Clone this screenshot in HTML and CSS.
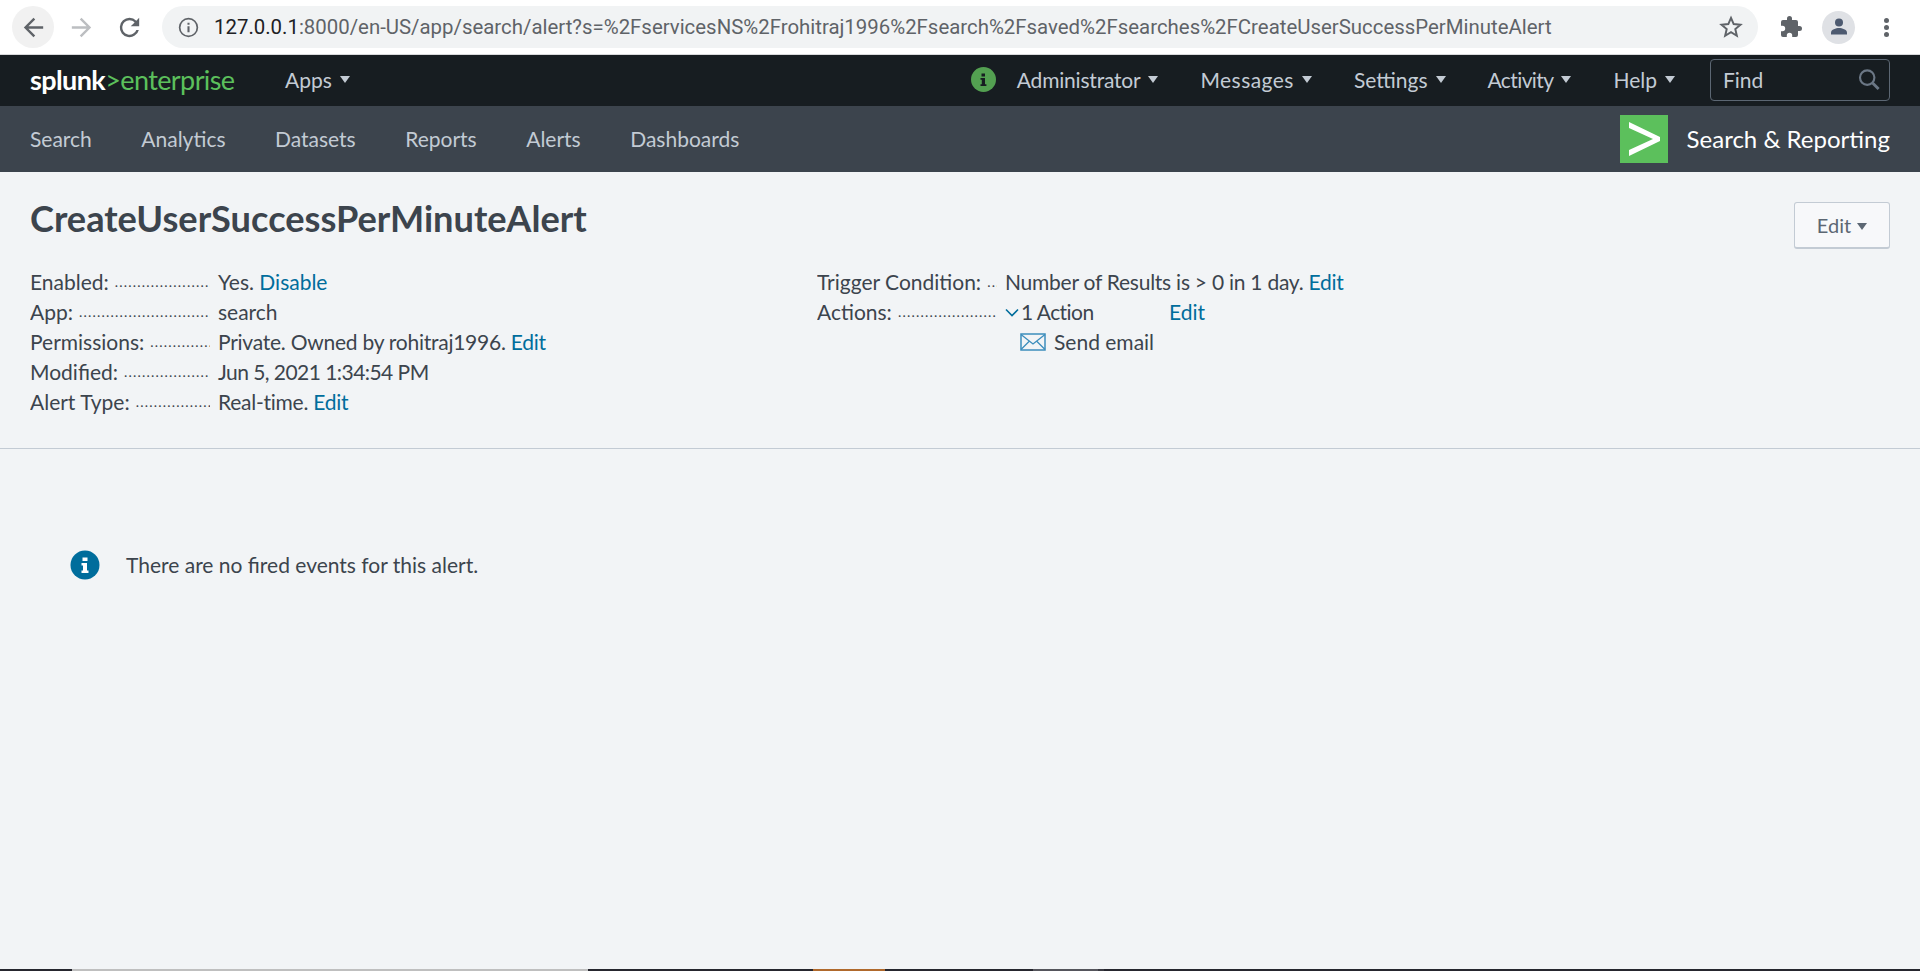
FILE: index.html
```html
<!DOCTYPE html>
<html lang="en">
<head>
  <meta charset="UTF-8">
  <title>CreateUserSuccessPerMinuteAlert</title>
  <link rel="stylesheet" href="styles.css">
</head>
<body>
  <!-- browser toolbar -->
  <div class="toolbar">
    <span class="tool-btn back">
      <svg width="29" height="29" viewBox="0 0 24 24"><path d="M20 11H7.800l5.600-5.600L12 4l-8 8 8 8 1.400-1.400L7.800 13H20z" fill="#5f6368"/></svg>
    </span>
    <span class="tool-btn">
      <svg width="29" height="29" viewBox="0 0 24 24"><path d="M4 11h12.200l-5.600-5.600L12 4l8 8-8 8-1.400-1.400 5.600-5.600H4z" fill="#bcbec1"/></svg>
    </span>
    <span class="tool-btn">
      <svg width="29" height="29" viewBox="0 0 24 24"><path d="M17.650 6.350A7.950 7.950 0 0 0 12 4a8 8 0 1 0 7.730 10h-2.080A6 6 0 1 1 12 6c1.660 0 3.140.690 4.220 1.780L13 11h7V4z" fill="#5f6368"/></svg>
    </span>
    <div class="omnibox">
      <svg class="site-info" width="23" height="23" viewBox="0 0 20 20"><circle cx="10" cy="10" r="7.700" fill="none" stroke="#5f6368" stroke-width="1.500"/><path d="M9.100 9h1.800v5.200H9.100zM9.100 5.800h1.800v1.800H9.100z" fill="#5f6368"/></svg>
      <span class="url"><b>127.0.0.1</b>:8000/en-US/app/search/alert?s=%2FservicesNS%2Frohitraj1996%2Fsearch%2Fsaved%2Fsearches%2FCreateUserSuccessPerMinuteAlert</span>
      <svg class="star" width="28" height="28" viewBox="0 0 24 24"><path d="M12 4.200l2.300 5.300 5.800.5-4.400 3.800 1.300 5.700-5-3-5 3 1.300-5.700L3.900 10l5.800-.5z" fill="none" stroke="#5f6368" stroke-width="1.700"/></svg>
    </div>
    <svg class="puzzle" width="24" height="24" viewBox="0 0 24 24"><path d="M20.500 11H19V7a2 2 0 0 0-2-2h-4V3.500a2.500 2.500 0 0 0-5 0V5H4a2 2 0 0 0-2 2v3.800h1.500a2.700 2.700 0 0 1 0 5.400H2V20a2 2 0 0 0 2 2h3.800v-1.500a2.700 2.700 0 0 1 5.400 0V22H17a2 2 0 0 0 2-2v-4h1.500a2.500 2.500 0 0 0 0-5z" fill="#5f6368"/></svg>
    <span class="avatar">
      <svg width="20" height="20" viewBox="0 0 20 20"><circle cx="10" cy="5.500" r="4" fill="#4d5a70"/><path d="M2 17.500v-2c0-3 5-4.500 8-4.500s8 1.500 8 4.500v2z" fill="#4d5a70"/></svg>
    </span>
    <span class="kebab"><i></i><i></i><i></i></span>
  </div>

  <!-- splunk bar -->
  <div class="splunk-bar">
    <div class="logo"><span class="logo-white">splunk</span><span class="logo-green">&gt;enterprise</span></div>
    <a class="menu">Apps<i class="caret"></i></a>
    <div class="bar-right">
      <span class="health">
        <svg width="25" height="25" viewBox="0 0 25 25"><circle cx="12.500" cy="12.500" r="12.500" fill="#53a051"/><path d="M10.500 6.500h3.500v3h-3.500zM9.500 11h4.500v6.200h1.400v1.800H9.500v-1.800h1.300v-4.400H9.500z" fill="#171d21"/></svg>
      </span>
      <a class="menu admin">Administrator<i class="caret"></i></a>
      <a class="menu wide">Messages<i class="caret"></i></a>
      <a class="menu">Settings<i class="caret"></i></a>
      <a class="menu narrow">Activity<i class="caret"></i></a>
      <a class="menu">Help<i class="caret"></i></a>
      <div class="find">
        <span>Find</span>
        <svg width="24" height="24" viewBox="0 0 20 20"><circle cx="8.500" cy="8" r="6" fill="none" stroke="#6b7785" stroke-width="1.800"/><path d="M13 12.500l5 5" stroke="#6b7785" stroke-width="2.400"/></svg>
      </div>
    </div>
  </div>

  <!-- app bar -->
  <div class="app-bar">
    <nav class="app-nav">
      <a>Search</a>
      <a>Analytics</a>
      <a>Datasets</a>
      <a>Reports</a>
      <a>Alerts</a>
      <a>Dashboards</a>
    </nav>
    <div class="app-name">
      <span class="app-icon">
        <svg width="48" height="48" viewBox="0 0 48 48"><path d="M9 7l31 15v4L9 41v-6l24-11L9 13z" fill="#fff"/></svg>
      </span>
      <span class="app-label">Search &amp; Reporting</span>
    </div>
  </div>

  <!-- alert header -->
  <header class="alert-head">
    <div class="title-row">
      <h1>CreateUserSuccessPerMinuteAlert</h1>
      <button class="edit-btn">Edit<i class="caret dark"></i></button>
    </div>
    <div class="meta">
      <dl class="meta-col left">
        <div class="row"><dt>Enabled:</dt><dd>Yes. <a>Disable</a></dd></div>
        <div class="row"><dt>App:</dt><dd>search</dd></div>
        <div class="row"><dt>Permissions:</dt><dd class="tight">Private. Owned by rohitraj1996. <a>Edit</a></dd></div>
        <div class="row"><dt>Modified:</dt><dd class="tighter">Jun 5, 2021 1:34:54 PM</dd></div>
        <div class="row"><dt>Alert Type:</dt><dd class="tight">Real-time. <a>Edit</a></dd></div>
      </dl>
      <dl class="meta-col right">
        <div class="row"><dt>Trigger Condition:</dt><dd class="tight">Number of Results is &gt; 0 in 1 day. <a>Edit</a></dd></div>
        <div class="row">
          <dt>Actions:</dt>
          <dd class="actions">
            <svg class="chev" width="14" height="9" viewBox="0 0 14 9"><path d="M1 1.500L7 7.500l6-6" fill="none" stroke="#006d9c" stroke-width="1.600"/></svg>
            <span class="action-count tighter">1 Action</span><a>Edit</a>
          </dd>
        </div>
        <div class="row">
          <dt class="blank"></dt>
          <dd class="send">
            <svg width="26" height="18" viewBox="0 0 26 18"><rect x="1" y="1" width="24" height="16" fill="none" stroke="#3c8dbc" stroke-width="1.500"/><path d="M1 1.500l12 9.500 12-9.500M1 16.500l8.500-8.500M25 16.500L16.500 8" fill="none" stroke="#3c8dbc" stroke-width="1.300"/></svg>
            <span>Send email</span>
          </dd>
        </div>
      </dl>
    </div>
  </header>

  <main class="empty">
    <svg width="30" height="30" viewBox="0 0 30 30"><circle cx="15" cy="15" r="14.500" fill="#006d9c"/><path d="M12.500 7.500h5v3.500h-5zM11.500 13h5.500v7.500h1.500V23h-7v-2.500H13v-5h-1.500z" fill="#fff"/></svg>
    <p>There are no fired events for this alert.</p>
  </main>

  <!-- taskbar sliver along the bottom edge -->
  <div class="taskstrip">
    <i class="s1"></i><i class="s2"></i><i class="s3"></i><i class="s4"></i><i class="s5"></i><i class="s6"></i><i class="s7"></i><i class="s8"></i>
  </div>
</body>
</html>
```
FILE: styles.css
```css
html, body {
  margin: 0;
  padding: 0;
  height: 971px;
  overflow: hidden;
}
body {
  display: flex;
  flex-direction: column;
  background: #f2f4f6;
  color: #3c444d;
  font-family: "Lato", "Open Sans", sans-serif;
  font-size: 21px;
}
a {
  color: #006d9c;
  text-decoration: none;
}

/* browser toolbar */
.toolbar {
  height: 54px;
  background: #fff;
  border-bottom: 1px solid #d8d9db;
  display: flex;
  align-items: center;
  padding: 0 30px 0 12px;
  flex: none;
}
.tool-btn {
  width: 42px;
  height: 42px;
  margin-right: 6px;
  border-radius: 50%;
  display: flex;
  align-items: center;
  justify-content: center;
  flex: none;
}
.tool-btn.back {
  background: #f1f1f1;
}
.omnibox {
  flex: 1;
  height: 42px;
  margin-left: 6px;
  background: #f1f3f4;
  border-radius: 21px;
  display: flex;
  align-items: center;
  padding: 0 13px 0 15px;
}
.url {
  flex: 1;
  margin-left: 14px;
  font-family: "Roboto", sans-serif;
  font-size: 20.400px;
  color: #5f6368;
  white-space: nowrap;
}
.url b {
  font-weight: 400;
  color: #202124;
}
.puzzle {
  flex: none;
  margin-left: 21px;
}
.avatar {
  width: 33px;
  height: 33px;
  margin-left: 19px;
  background: #dfe1e5;
  border-radius: 50%;
  display: flex;
  align-items: center;
  justify-content: center;
  flex: none;
}
.kebab {
  width: 6px;
  margin-left: 29px;
  display: flex;
  flex-direction: column;
  gap: 2px;
  flex: none;
}
.kebab i {
  width: 5px;
  height: 5px;
  border-radius: 50%;
  background: #5f6368;
}

/* splunk bar */
.splunk-bar {
  height: 51px;
  box-sizing: border-box;
  background: #171d21;
  display: flex;
  align-items: center;
  padding: 0 30px 2px;
  flex: none;
  color: #c3cbd4;
}
.logo {
  font-family: "Lato", sans-serif;
  font-size: 27px;
  letter-spacing: -0.600px;
  width: 255px;
  white-space: nowrap;
}
.logo-white {
  color: #fff;
  font-weight: 700;
}
.logo-green {
  color: #5cc05c;
}
.menu {
  color: #c3cbd4;
  font-size: 21px;
  display: flex;
  align-items: center;
  white-space: nowrap;
}
.menu.admin {
  letter-spacing: -0.200px;
}
.menu.wide {
  letter-spacing: 0.450px;
}
.menu.narrow {
  letter-spacing: -0.600px;
}
.caret {
  display: inline-block;
  width: 0;
  height: 0;
  margin-left: 8px;
  border-left: 5.500px solid transparent;
  border-right: 5.500px solid transparent;
  border-top: 7px solid #c3cbd4;
}
.caret.dark {
  border-left-width: 5px;
  border-right-width: 5px;
  border-top-color: #5c6773;
}
.bar-right {
  margin-left: auto;
  display: flex;
  align-items: center;
  gap: 42px;
}
.health {
  display: flex;
  margin-right: -21px;
}
.find {
  width: 180px;
  height: 42px;
  box-sizing: border-box;
  margin-left: -7px;
  border: 1px solid #5c6773;
  border-radius: 4px;
  display: flex;
  align-items: center;
  justify-content: space-between;
  padding: 0 8px 0 12px;
  color: #c3cbd4;
  font-size: 21px;
}

/* app bar */
.app-bar {
  height: 66px;
  box-sizing: border-box;
  background: #3c444d;
  display: flex;
  align-items: center;
  justify-content: space-between;
  padding: 0 30px;
  flex: none;
}
.app-nav {
  display: flex;
  gap: 49.500px;
  padding-bottom: 2px;
}
.app-nav a {
  color: #c3cbd4;
  font-size: 21px;
}
.app-name {
  display: flex;
  align-items: center;
  gap: 19px;
  color: #fff;
  font-size: 24px;
}
.app-label {
  padding-bottom: 2px;
}
.app-icon {
  width: 48px;
  height: 48px;
  background: #5cc05c;
  display: flex;
  flex: none;
}

/* alert header */
.alert-head {
  height: 277px;
  box-sizing: border-box;
  border-bottom: 1px solid #c3cbd4;
  padding: 26px 30px 0;
  flex: none;
}
.title-row {
  display: flex;
  justify-content: space-between;
  align-items: flex-start;
}
h1 {
  margin: 0;
  font-size: 36.200px;
  font-weight: 700;
  line-height: 40px;
  color: #3c444d;
}
.edit-btn {
  width: 96px;
  height: 47px;
  margin-top: 4px;
  background: #f7f8fa;
  border: 1px solid #c3cbd4;
  border-bottom-width: 2px;
  border-radius: 3px;
  font: inherit;
  font-size: 20px;
  color: #5c6773;
}
.edit-btn .caret {
  margin-left: 6px;
  vertical-align: 3px;
}
.meta {
  display: flex;
  margin-top: 18px;
}
.meta-col {
  margin: 0;
  line-height: 30px;
}
.meta-col.left {
  width: 787px;
}
.row {
  display: flex;
}
dt {
  width: 180px;
  margin-right: 8px;
  flex: none;
  display: flex;
  overflow: hidden;
  white-space: nowrap;
}
dt::after {
  content: "..................................................";
  margin-left: 6px;
  font-size: 14px;
  letter-spacing: 1.200px;
}
dt.blank::after {
  content: none;
}
dd {
  margin: 0;
  white-space: nowrap;
}
.tight {
  letter-spacing: -0.250px;
}
.tighter {
  letter-spacing: -0.550px;
}
.actions {
  display: flex;
  align-items: center;
}
.chev {
  margin-right: 2px;
}
.action-count {
  width: 148px;
}
.send {
  display: flex;
  align-items: center;
  gap: 8px;
  padding-left: 15px;
}

.empty {
  flex: 1;
  display: flex;
  align-items: flex-start;
  padding: 101px 0 0 70px;
  gap: 26px;
}
.empty svg {
  flex: none;
}
.empty p {
  margin: 0;
  line-height: 30px;
}

/* bottom strip */
.taskstrip {
  height: 2px;
  display: flex;
  flex: none;
  background: #26262e;
}
.taskstrip i {
  display: block;
  height: 2px;
}
.s1 { width: 72px; }
.s2 { width: 516px; background: #bfbfbf; }
.s3 { width: 225px; }
.s4 { width: 72px; background: #b0692c; }
.s5 { width: 148px; }
.s6 { width: 65px; background: #55555c; }
.s7 { width: 6px; background: #3a3a42; }
.s8 { flex: 1; }
```
